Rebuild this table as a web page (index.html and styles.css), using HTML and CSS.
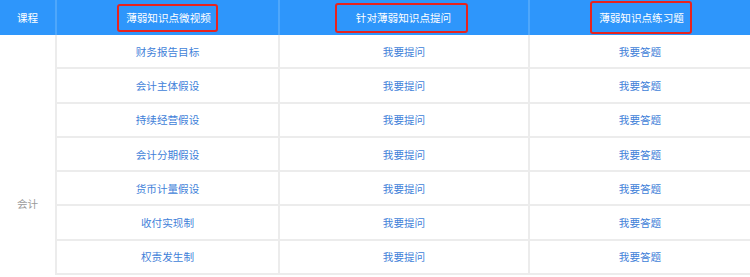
FILE: index.html
```html
<!DOCTYPE html>
<html lang="zh-CN">
<head>
<meta charset="utf-8">
<title>薄弱知识点</title>
<link rel="stylesheet" href="styles.css">
</head>
<body>
<table class="kt">
  <colgroup>
    <col class="c1"><col class="c2"><col class="c3"><col class="c4">
  </colgroup>
  <thead>
    <tr>
      <th>课程</th>
      <th><span class="mark mark-a">薄弱知识点微视频</span></th>
      <th><span class="mark mark-b">针对薄弱知识点提问</span></th>
      <th class="last"><span class="mark mark-c">薄弱知识点练习题</span></th>
    </tr>
  </thead>
  <tbody>
    <tr>
      <td class="course" rowspan="7">会计</td>
      <td><a href="#">财务报告目标</a></td>
      <td><a href="#">我要提问</a></td>
      <td class="last"><a href="#">我要答题</a></td>
    </tr>
    <tr><td><a href="#">会计主体假设</a></td><td><a href="#">我要提问</a></td><td class="last"><a href="#">我要答题</a></td></tr>
    <tr><td><a href="#">持续经营假设</a></td><td><a href="#">我要提问</a></td><td class="last"><a href="#">我要答题</a></td></tr>
    <tr><td><a href="#">会计分期假设</a></td><td><a href="#">我要提问</a></td><td class="last"><a href="#">我要答题</a></td></tr>
    <tr><td><a href="#">货币计量假设</a></td><td><a href="#">我要提问</a></td><td class="last"><a href="#">我要答题</a></td></tr>
    <tr><td><a href="#">收付实现制</a></td><td><a href="#">我要提问</a></td><td class="last"><a href="#">我要答题</a></td></tr>
    <tr><td><a href="#">权责发生制</a></td><td><a href="#">我要提问</a></td><td class="last"><a href="#">我要答题</a></td></tr>
  </tbody>
</table>
</body>
</html>
```

FILE: styles.css
```css
html, body {
  margin: 0;
  padding: 0;
  background: #ffffff;
}

body {
  font-family: "Noto Sans CJK SC", "Noto Sans", sans-serif;
  font-size: 10.6px;
}

.kt {
  width: 750px;
  border-collapse: separate;
  border-spacing: 0;
  table-layout: fixed;
}

.c1 { width: 57px; }
.c2 { width: 223px; }
.c3 { width: 250px; }
.c4 { width: 220px; }

.kt th {
  height: 35px;
  padding: 0;
  background: #2e96fb;
  color: #ffffff;
  font-weight: normal;
  text-align: center;
  vertical-align: middle;
  border-right: 2px solid #4ea7fb;
}

.kt th.last,
.kt td.last {
  border-right: none;
}

.kt td {
  height: 32.3px;
  padding: 0;
  text-align: center;
  vertical-align: middle;
  border-right: 2px solid #ececec;
  border-bottom: 2px solid #ececec;
}

.kt td.course {
  color: #9a9a9a;
  border-bottom: none;
  vertical-align: top;
  padding-top: 161px;
}

.kt a {
  color: #3f7fd9;
  text-decoration: none;
}

.mark {
  display: inline-block;
  border: 2px solid #e8231e;
  border-radius: 3px;
  line-height: 24px;
}

.mark-a {
  padding: 0 5px 0 7px;
  margin-left: 0;
}

.mark-b {
  padding: 1px 15px 1px 19px;
  margin-left: -5px;
}

.mark-c {
  padding: 3px 6px 2px 7px;
  margin-left: 2px;
}
```
